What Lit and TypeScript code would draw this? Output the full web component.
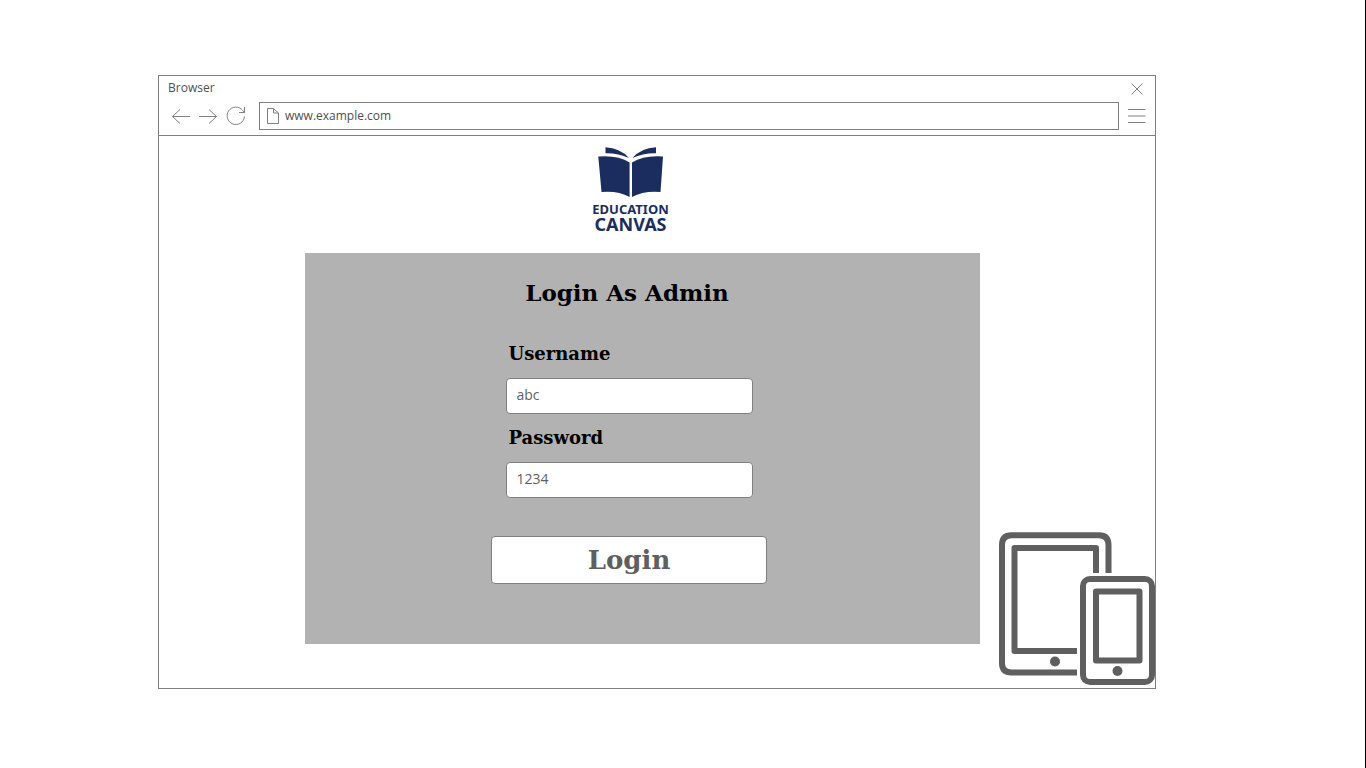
import { LitElement, html, css } from "lit";
import { customElement } from "lit/decorators.js";

@customElement("browser-toolbar")
export class BrowserToolbar extends LitElement {
  static styles = css`
    :host {
      display: block;
      border-bottom: 1px solid #808080;
      color: #5f5f5f;
      font-family: "Open Sans", "Noto Sans", sans-serif;
      font-size: 12px;
    }
    .title-row {
      display: flex;
      justify-content: space-between;
      align-items: flex-start;
      height: 24px;
      padding: 0 8px 0 9px;
    }
    .title {
      line-height: 24px;
      color: #4f4f4f;
    }
    .nav-row {
      display: flex;
      align-items: center;
      padding: 2px 8px 5px 12px;
    }
    button {
      display: flex;
      padding: 0;
      border: 0;
      background: none;
      color: #808080;
    }
    .close {
      padding-top: 2px;
    }
    .history {
      display: flex;
      gap: 7px;
      margin-right: 11px;
    }
    .address {
      display: flex;
      align-items: center;
      flex: 1;
      gap: 6px;
      box-sizing: border-box;
      height: 28px;
      margin-right: 9px;
      padding: 0 6px;
      border: 1px solid #808080;
    }
    .address input {
      flex: 1;
      min-width: 0;
      padding: 0 0 2px;
      border: 0;
      outline: 0;
      background: none;
      color: #4f4f4f;
      font: inherit;
    }
    svg {
      display: block;
      fill: none;
      stroke: #808080;
    }
  `;

  render() {
    return html`
      <div class="title-row">
        <span class="title">Browser</span>
        <button class="close" type="button" aria-label="Close">
          <svg width="20" height="20" viewBox="0 0 20 20"><path d="M4.500 5.500l11 11M15.500 5.500l-11 11" /></svg>
        </button>
      </div>
      <div class="nav-row">
        <div class="history">
          <button type="button" aria-label="Back">
            <svg width="20" height="20" viewBox="0 0 20 20"><path d="M19 10.500H1.500M9 3.500L1.500 10.500L9 17.500" /></svg>
          </button>
          <button type="button" aria-label="Forward">
            <svg width="20" height="20" viewBox="0 0 20 20"><path d="M1 10.500H18.500M11 3.500L18.500 10.500L11 17.500" /></svg>
          </button>
          <button type="button" aria-label="Reload">
            <svg width="23" height="20" viewBox="0 0 23 20">
              <path d="M19.500 10.500A8.700 8.700 0 1 1 17.500 4.200L19.500 6.500M19.500 1V6.500H14" />
            </svg>
          </button>
        </div>
        <div class="address">
          <svg width="13" height="18" viewBox="0 0 13 18">
            <path d="M1.500 1.500H7.500L12.500 6V16.500H1.500ZM7.500 1.500V6H12.500" />
          </svg>
          <input type="text" aria-label="Address" value="www.example.com" />
        </div>
        <button type="button" aria-label="Menu">
          <svg width="19" height="20" viewBox="0 0 19 20"><path d="M0 3.500H17.500M0 10H17.500M0 16.500H17.500" /></svg>
        </button>
      </div>
    `;
  }
}

@customElement("brand-logo")
export class BrandLogo extends LitElement {
  static styles = css`
    :host {
      display: flex;
      flex-direction: column;
      align-items: center;
      color: #1b2d5e;
      font-family: "Noto Sans", "Open Sans", sans-serif;
      font-weight: 700;
    }
    svg {
      display: block;
      fill: currentColor;
    }
    .top {
      margin-top: 5px;
      font-size: 13px;
      line-height: 14px;
    }
    .bottom {
      font-size: 18px;
      line-height: 16px;
    }
  `;

  render() {
    return html`
      <svg width="66" height="50" viewBox="0 0 66 50" aria-hidden="true">
        <path d="M0.300 9.500Q20 8 31.600 15.500V50Q20 43.500 3.500 45Z" />
        <path d="M65 9.500Q46 8 34 15.500V50Q46 43.500 62.500 45Z" />
        <path d="M7.500 0.300Q22 1 31 11Q20 6 7.500 6.300Z" />
        <path d="M58 0.300Q43 1 34.500 11Q45 6 58 6.300Z" />
      </svg>
      <span class="top">EDUCATION</span>
      <span class="bottom">CANVAS</span>
    `;
  }
}

@customElement("login-panel")
export class LoginPanel extends LitElement {
  static styles = css`
    :host {
      display: block;
      padding: 24px 27px 60px 0;
      background: #b2b2b2;
      font-family: "DejaVu Serif", serif;
    }
    form {
      display: flex;
      flex-direction: column;
      align-items: center;
    }
    h1 {
      margin: 0 0 32px;
      padding-right: 4px;
      font-size: 23px;
      line-height: 32px;
      font-weight: 700;
    }
    .field {
      display: flex;
      flex-direction: column;
      width: 247px;
      margin-bottom: 11px;
    }
    label {
      margin-bottom: 12px;
      padding-left: 3px;
      font-size: 18px;
      line-height: 25px;
      font-weight: 700;
    }
    input {
      box-sizing: border-box;
      width: 100%;
      height: 36px;
      padding: 0 10px 3px;
      border: 1px solid #808080;
      border-radius: 4px;
      background: #fff;
      color: #5f5f5f;
      font: 14px "Open Sans", "Noto Sans", sans-serif;
    }
    button {
      width: 276px;
      height: 48px;
      margin-top: 27px;
      padding: 0;
      border: 1px solid #808080;
      border-radius: 4px;
      background: #fff;
      color: #5f5f5f;
      font-family: inherit;
      font-size: 26px;
      font-weight: 700;
    }
  `;

  render() {
    return html`
      <form @submit=${(e: Event) => e.preventDefault()}>
        <h1>Login As Admin</h1>
        <div class="field">
          <label for="username">Username</label>
          <input id="username" type="text" value="abc" />
        </div>
        <div class="field">
          <label for="password">Password</label>
          <input id="password" type="text" value="1234" />
        </div>
        <button type="submit">Login</button>
      </form>
    `;
  }
}

@customElement("app-root")
export class AppRoot extends LitElement {
  static styles = css`
    :host {
      display: block;
      box-sizing: border-box;
      min-height: 100vh;
      padding: 75px 209px 79px 158px;
      border-right: 1px solid #000;
      background: #fff;
    }
    .window {
      position: relative;
      border: 1px solid #808080;
    }
    main {
      padding: 11px 175px 44px 146px;
    }
    brand-logo {
      margin-bottom: 21px;
      padding-right: 24px;
    }
    .devices {
      position: absolute;
      right: -1px;
      bottom: 2px;
      display: block;
      fill: none;
      stroke: #5f5f5f;
      stroke-width: 6;
    }
    .dot {
      fill: #5f5f5f;
      stroke: none;
    }
  `;

  render() {
    return html`
      <div class="window">
        <browser-toolbar></browser-toolbar>
        <main>
          <brand-logo></brand-logo>
          <login-panel></login-panel>
        </main>
        <svg class="devices" width="157" height="154" viewBox="0 0 157 154" aria-hidden="true">
          <path d="M109.500 41V13Q109.500 3.300 100 3.300H12.500Q3 3.300 3 13V131Q3 140.500 12.500 140.500H78" />
          <path d="M97 41V16H15.500V119H78" stroke-linejoin="round" />
          <circle class="dot" cx="56" cy="129.500" r="5" />
          <rect x="84" y="47" width="69" height="103" rx="7" />
          <rect x="97" y="59.500" width="43.500" height="69" stroke-linejoin="round" />
          <circle class="dot" cx="118.500" cy="139" r="5" />
        </svg>
      </div>
    `;
  }
}
